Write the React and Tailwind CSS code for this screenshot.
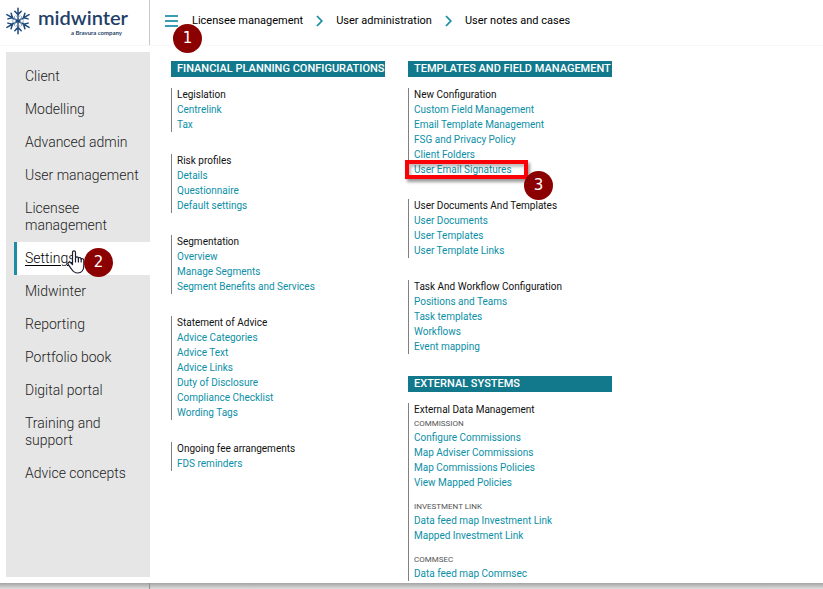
const menu = [
  'Client',
  'Modelling',
  'Advanced admin',
  'User management',
  'Licensee management',
  'Settings',
  'Midwinter',
  'Reporting',
  'Portfolio book',
  'Digital portal',
  'Training and support',
  'Advice concepts',
];

const planning = [
  { title: 'Legislation', parts: [{ links: ['Centrelink', 'Tax'] }] },
  { title: 'Risk profiles', parts: [{ links: ['Details', 'Questionnaire', 'Default settings'] }] },
  { title: 'Segmentation', parts: [{ links: ['Overview', 'Manage Segments', 'Segment Benefits and Services'] }] },
  {
    title: 'Statement of Advice',
    parts: [
      {
        links: [
          'Advice Categories',
          'Advice Text',
          'Advice Links',
          'Duty of Disclosure',
          'Compliance Checklist',
          'Wording Tags',
        ],
      },
    ],
  },
  { title: 'Ongoing fee arrangements', parts: [{ links: ['FDS reminders'] }] },
];

const templates = [
  {
    title: 'New Configuration',
    parts: [
      {
        links: [
          'Custom Field Management',
          'Email Template Management',
          'FSG and Privacy Policy',
          'Client Folders',
          'User Email Signatures',
        ],
      },
    ],
  },
  {
    title: 'User Documents And Templates',
    parts: [{ links: ['User Documents', 'User Templates', 'User Template Links'] }],
  },
  {
    title: 'Task And Workflow Configuration',
    parts: [{ links: ['Positions and Teams', 'Task templates', 'Workflows', 'Event mapping'] }],
  },
];

const external = [
  {
    title: 'External Data Management',
    parts: [
      {
        label: 'COMMISSION',
        links: [
          'Configure Commissions',
          'Map Adviser Commissions',
          'Map Commissions Policies',
          'View Mapped Policies',
        ],
      },
      { label: 'INVESTMENT LINK', links: ['Data feed map Investment Link', 'Mapped Investment Link'] },
      { label: 'COMMSEC', links: ['Data feed map Commsec'] },
    ],
  },
];

function Badge({ children, className }) {
  return (
    <span
      className={`absolute z-10 flex size-[29px] items-center justify-center rounded-full bg-[#8b0000] font-['DejaVu_Sans',sans-serif] text-[15px] leading-none font-normal text-white ${className}`}
    >
      {children}
    </span>
  );
}

function Snowflake() {
  return (
    <svg viewBox="0 0 24 28" className="h-7 w-6 shrink-0" fill="none" strokeLinecap="round">
      {[0, 60, 120, 180, 240, 300].map((angle) => (
        <g key={angle} transform={`rotate(${angle} 12 14)`}>
          <path d="M12 14V1.2M8.8 4.2L12 7.6L15.2 4.2" stroke="#1f4a7a" strokeWidth="1.5" />
          <path d="M10 8.6L12 10.6L14 8.6" stroke="#7f9dbd" strokeWidth="1" />
        </g>
      ))}
    </svg>
  );
}

function HandCursor() {
  return (
    <svg viewBox="0 0 18 24" className="absolute top-[8px] left-[50px] h-6 w-[18px]" fill="#fff" stroke="#1c1c2c" strokeWidth="1.2" strokeLinejoin="round" strokeLinecap="round">
      <path d="M5.5 14.5V2.4C5.5 .3 8.5 .3 8.5 2.4V8C8.9 6.3 11.3 6.6 11.4 8.3C12 7 14.1 7.4 14.2 9.1C15 8.2 16.8 8.7 16.8 10.3V15.5C16.8 20 14.6 23 10.6 23C7 23 5.6 21 4.3 18.8L1.2 14.4C.2 12.8 2.2 11.4 3.5 12.6Z" />
      <path d="M8.5 8V12M11.4 8.3V12M14.2 9.1V12" fill="none" />
    </svg>
  );
}

function Chevron() {
  return (
    <svg viewBox="0 0 7 12" className="h-3 w-[7px]" fill="none" stroke="#1b8ea6" strokeWidth="1.8">
      <path d="M1 1L5.8 6L1 11" />
    </svg>
  );
}

function Group({ title, parts }) {
  return (
    <section className="border-l border-[#808080] pl-[5px]">
      <h3 className="text-[10px] leading-[14px] text-[#111]">{title}</h3>
      <div className="flex flex-col gap-[10px]">
        {parts.map(({ label, links }) => (
          <div key={links[0]}>
            {label && <h4 className="text-[8px] leading-[13px] text-[#555]">{label}</h4>}
            <ul>
              {links.map((link) => (
                <li key={link} className="relative text-[10px] leading-[15px] whitespace-nowrap text-[#0b8fa6]">
                  <a href="#">{link}</a>
                  {link === 'User Email Signatures' && (
                    <>
                      <span className="absolute -top-[2px] -left-[9px] h-[19px] w-[123px] border-4 border-[#fb0007] shadow-[2px_3px_3px_rgba(0,0,0,0.4),inset_2px_3px_3px_rgba(0,0,0,0.25)]" />
                      <Badge className="top-[9px] left-[110px]">3</Badge>
                    </>
                  )}
                </li>
              ))}
            </ul>
          </div>
        ))}
      </div>
    </section>
  );
}

function Block({ title, groups }) {
  return (
    <section>
      <h2 className="mb-[11px] bg-[#12798d] px-[6px] text-[11px] leading-4 font-medium whitespace-nowrap text-white">{title}</h2>
      <div className="flex flex-col gap-[22px]">
        {groups.map((group) => (
          <Group key={group.title} {...group} />
        ))}
      </div>
    </section>
  );
}

export default function App() {
  return (
    <div className="flex h-screen flex-col overflow-hidden bg-white font-[Roboto,sans-serif]">
      <header className="flex h-[46px] shrink-0 border-b border-[#f7f7f7]">
        <a href="#" className="flex w-[150px] shrink-0 items-center gap-2 border-r border-[#c8c8c8] pb-1 pl-[6px] text-[#1f3f68]">
          <Snowflake />
          <span className="flex flex-col items-end font-[Lato,sans-serif]">
            <span className="text-[20px] leading-6 font-semibold">midwinter</span>
            <span className="pr-[6px] text-[6px] leading-[7px] font-bold">a Bravura company</span>
          </span>
        </a>
        <nav className="relative flex items-center pb-[3px] pl-[15px] text-[11px] text-black">
          <button type="button" aria-label="Menu" className="mr-[14px] flex w-[13px] flex-col gap-[3px]">
            <span className="h-[2px] w-full bg-[#3a9db2]" />
            <span className="h-[2px] w-full bg-[#3a9db2]" />
            <span className="h-[2px] w-full bg-[#3a9db2]" />
          </button>
          <Badge className="top-[24px] left-[23px]">1</Badge>
          <div className="flex items-center gap-[13px] whitespace-nowrap">
            <a href="#">Licensee management</a>
            <Chevron />
            <a href="#">User administration</a>
            <Chevron />
            <a href="#">User notes and cases</a>
          </div>
        </nav>
      </header>

      <div className="flex min-h-0 flex-1 pt-[6px] pb-[6px] pl-[6px]">
        <nav className="w-[144px] shrink-0 bg-[#e6e6e6] pt-2 pl-2">
          <ul className="text-[14px] leading-[17px] font-light text-[#222]">
            {menu.map((item) =>
              item === 'Settings' ? (
                <li key={item} className="relative border-l-[3px] border-[#1b8ea6] bg-white py-2 pl-2 text-black">
                  <a href="#" className="underline underline-offset-2">{item}</a>
                  <HandCursor />
                  <Badge className="top-[6px] left-[67px]">2</Badge>
                </li>
              ) : (
                <li key={item} className="py-2 pr-1 pl-[11px]">
                  <a href="#">{item}</a>
                </li>
              ),
            )}
          </ul>
        </nav>
        <main className="flex min-w-0 flex-1 items-start gap-[23px] pt-[9px] pl-[21px]">
          <div className="w-[214px]">
            <Block title="FINANCIAL PLANNING CONFIGURATIONS" groups={planning} />
          </div>
          <div className="flex w-[204px] flex-col gap-[22px]">
            <Block title="TEMPLATES AND FIELD MANAGEMENT" groups={templates} />
            <Block title="EXTERNAL SYSTEMS" groups={external} />
          </div>
        </main>
      </div>

      <div className="h-[6px] shrink-0 bg-linear-to-b from-[#a4a4a4] to-[#dedede]">
        <div className="h-full w-[150px] border-r border-[#909090]" />
      </div>
    </div>
  );
}
